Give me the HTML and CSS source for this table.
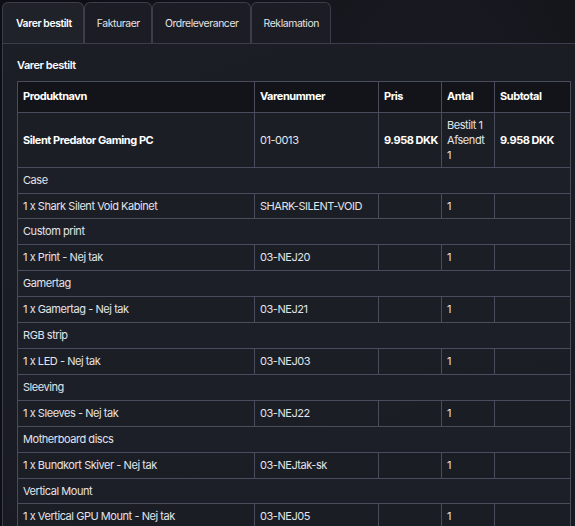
FILE: index.html
```html
<!DOCTYPE html>
<html lang="da">
<head>
<meta charset="utf-8">
<title>Varer bestilt</title>
<link rel="stylesheet" href="styles.css">
</head>
<body>
<div class="page">
  <nav class="tabs">
    <div class="tab active">Varer bestilt</div>
    <div class="tab">Fakturaer</div>
    <div class="tab">Ordreleverancer</div>
    <div class="tab">Reklamation</div>
  </nav>
  <section class="panel">
    <h2 class="caption">Varer bestilt</h2>
    <table class="orders">
      <colgroup>
        <col class="c1"><col class="c2"><col class="c3"><col class="c4"><col class="c5">
      </colgroup>
      <thead>
        <tr><th>Produktnavn</th><th>Varenummer</th><th>Pris</th><th>Antal</th><th>Subtotal</th></tr>
      </thead>
      <tbody>
        <tr class="main">
          <td class="b">Silent Predator Gaming PC</td><td>01-0013</td><td class="b">9.958 DKK</td><td>Bestilt 1<br>Afsendt<br>1</td><td class="b">9.958 DKK</td>
        </tr>
        <tr class="group"><td colspan="5">Case</td></tr>
        <tr><td>1 x Shark Silent Void Kabinet</td><td>SHARK-SILENT-VOID</td><td></td><td>1</td><td></td></tr>
        <tr class="group"><td colspan="5">Custom print</td></tr>
        <tr><td>1 x Print - Nej tak</td><td>03-NEJ20</td><td></td><td>1</td><td></td></tr>
        <tr class="group"><td colspan="5">Gamertag</td></tr>
        <tr><td>1 x Gamertag - Nej tak</td><td>03-NEJ21</td><td></td><td>1</td><td></td></tr>
        <tr class="group"><td colspan="5">RGB strip</td></tr>
        <tr><td>1 x LED - Nej tak</td><td>03-NEJ03</td><td></td><td>1</td><td></td></tr>
        <tr class="group"><td colspan="5">Sleeving</td></tr>
        <tr><td>1 x Sleeves - Nej tak</td><td>03-NEJ22</td><td></td><td>1</td><td></td></tr>
        <tr class="group"><td colspan="5">Motherboard discs</td></tr>
        <tr><td>1 x Bundkort Skiver - Nej tak</td><td>03-NEJtak-sk</td><td></td><td>1</td><td></td></tr>
        <tr class="group"><td colspan="5">Vertical Mount</td></tr>
        <tr><td>1 x Vertical GPU Mount - Nej tak</td><td>03-NEJ05</td><td></td><td>1</td><td></td></tr>
      </tbody>
    </table>
  </section>
</div>
</body>
</html>
```

FILE: styles.css
```css
html, body {
  margin: 0;
  padding: 0;
  height: 100%;
  overflow: hidden;
}
body {
  background: radial-gradient(ellipse at 75% 15%, #1a1b22 0%, #0e0f14 60%), #0e0f14;
  font-family: Inter, "Noto Sans", sans-serif;
  font-size: 11px;
  letter-spacing: -0.45px;
  color: #eceef2;
}
.page {
  padding: 2px 0 0 2px;
}
.tabs {
  display: flex;
  height: 41px;
  border-bottom: 1px solid #3b3d4a;
}
.tab {
  display: flex;
  align-items: center;
  padding: 0 11px 0 12px;
  background: #1b1c24;
  border: 1px solid #3b3d4a;
  border-bottom: none;
  border-radius: 6px 6px 0 0;
  font-size: 10.4px;
  letter-spacing: -0.4px;
  color: #e2e4e9;
}
.tab.active {
  font-weight: 600;
  background: #20222a;
  color: #ffffff;
  padding: 0 11px 0 13px;
}
.panel {
  border-left: 1px solid #3b3d4a;
  background: linear-gradient(160deg, #1c1e26 0%, #1a1c24 50%, #17181f 100%);
  padding: 14px 0 0 14px;
  width: 600px;
  min-height: 500px;
}
.caption {
  margin: 0 0 8px 0;
  font-size: 11px;
  font-weight: 600;
  line-height: 15px;
  color: #ffffff;
}
.orders {
  border-collapse: collapse;
  table-layout: fixed;
  width: 553px;
}
.c1 { width: 237px; }
.c2 { width: 124px; }
.c3 { width: 63px; }
.c4 { width: 53px; }
.c5 { width: 76px; }
.orders th, .orders td {
  border: 1px solid #494c5b;
  padding: 5px;
  line-height: 14.9px;
  text-align: left;
  vertical-align: middle;
  font-size: 11px;
}
.orders th {
  background: #131419;
  font-weight: 700;
  color: #ffffff;
  padding-top: 7px;
  padding-bottom: 8px;
}
.orders td {
  background: rgba(28, 30, 38, 0.85);
  color: #e2e4e9;
}
.orders td.b {
  font-weight: 700;
  color: #ffffff;
  white-space: nowrap;
}
.orders tr.main td {
  padding-top: 5px;
  padding-bottom: 4px;
}
.orders tr.group td {
  background: rgba(30, 32, 41, 0.9);
}
```
